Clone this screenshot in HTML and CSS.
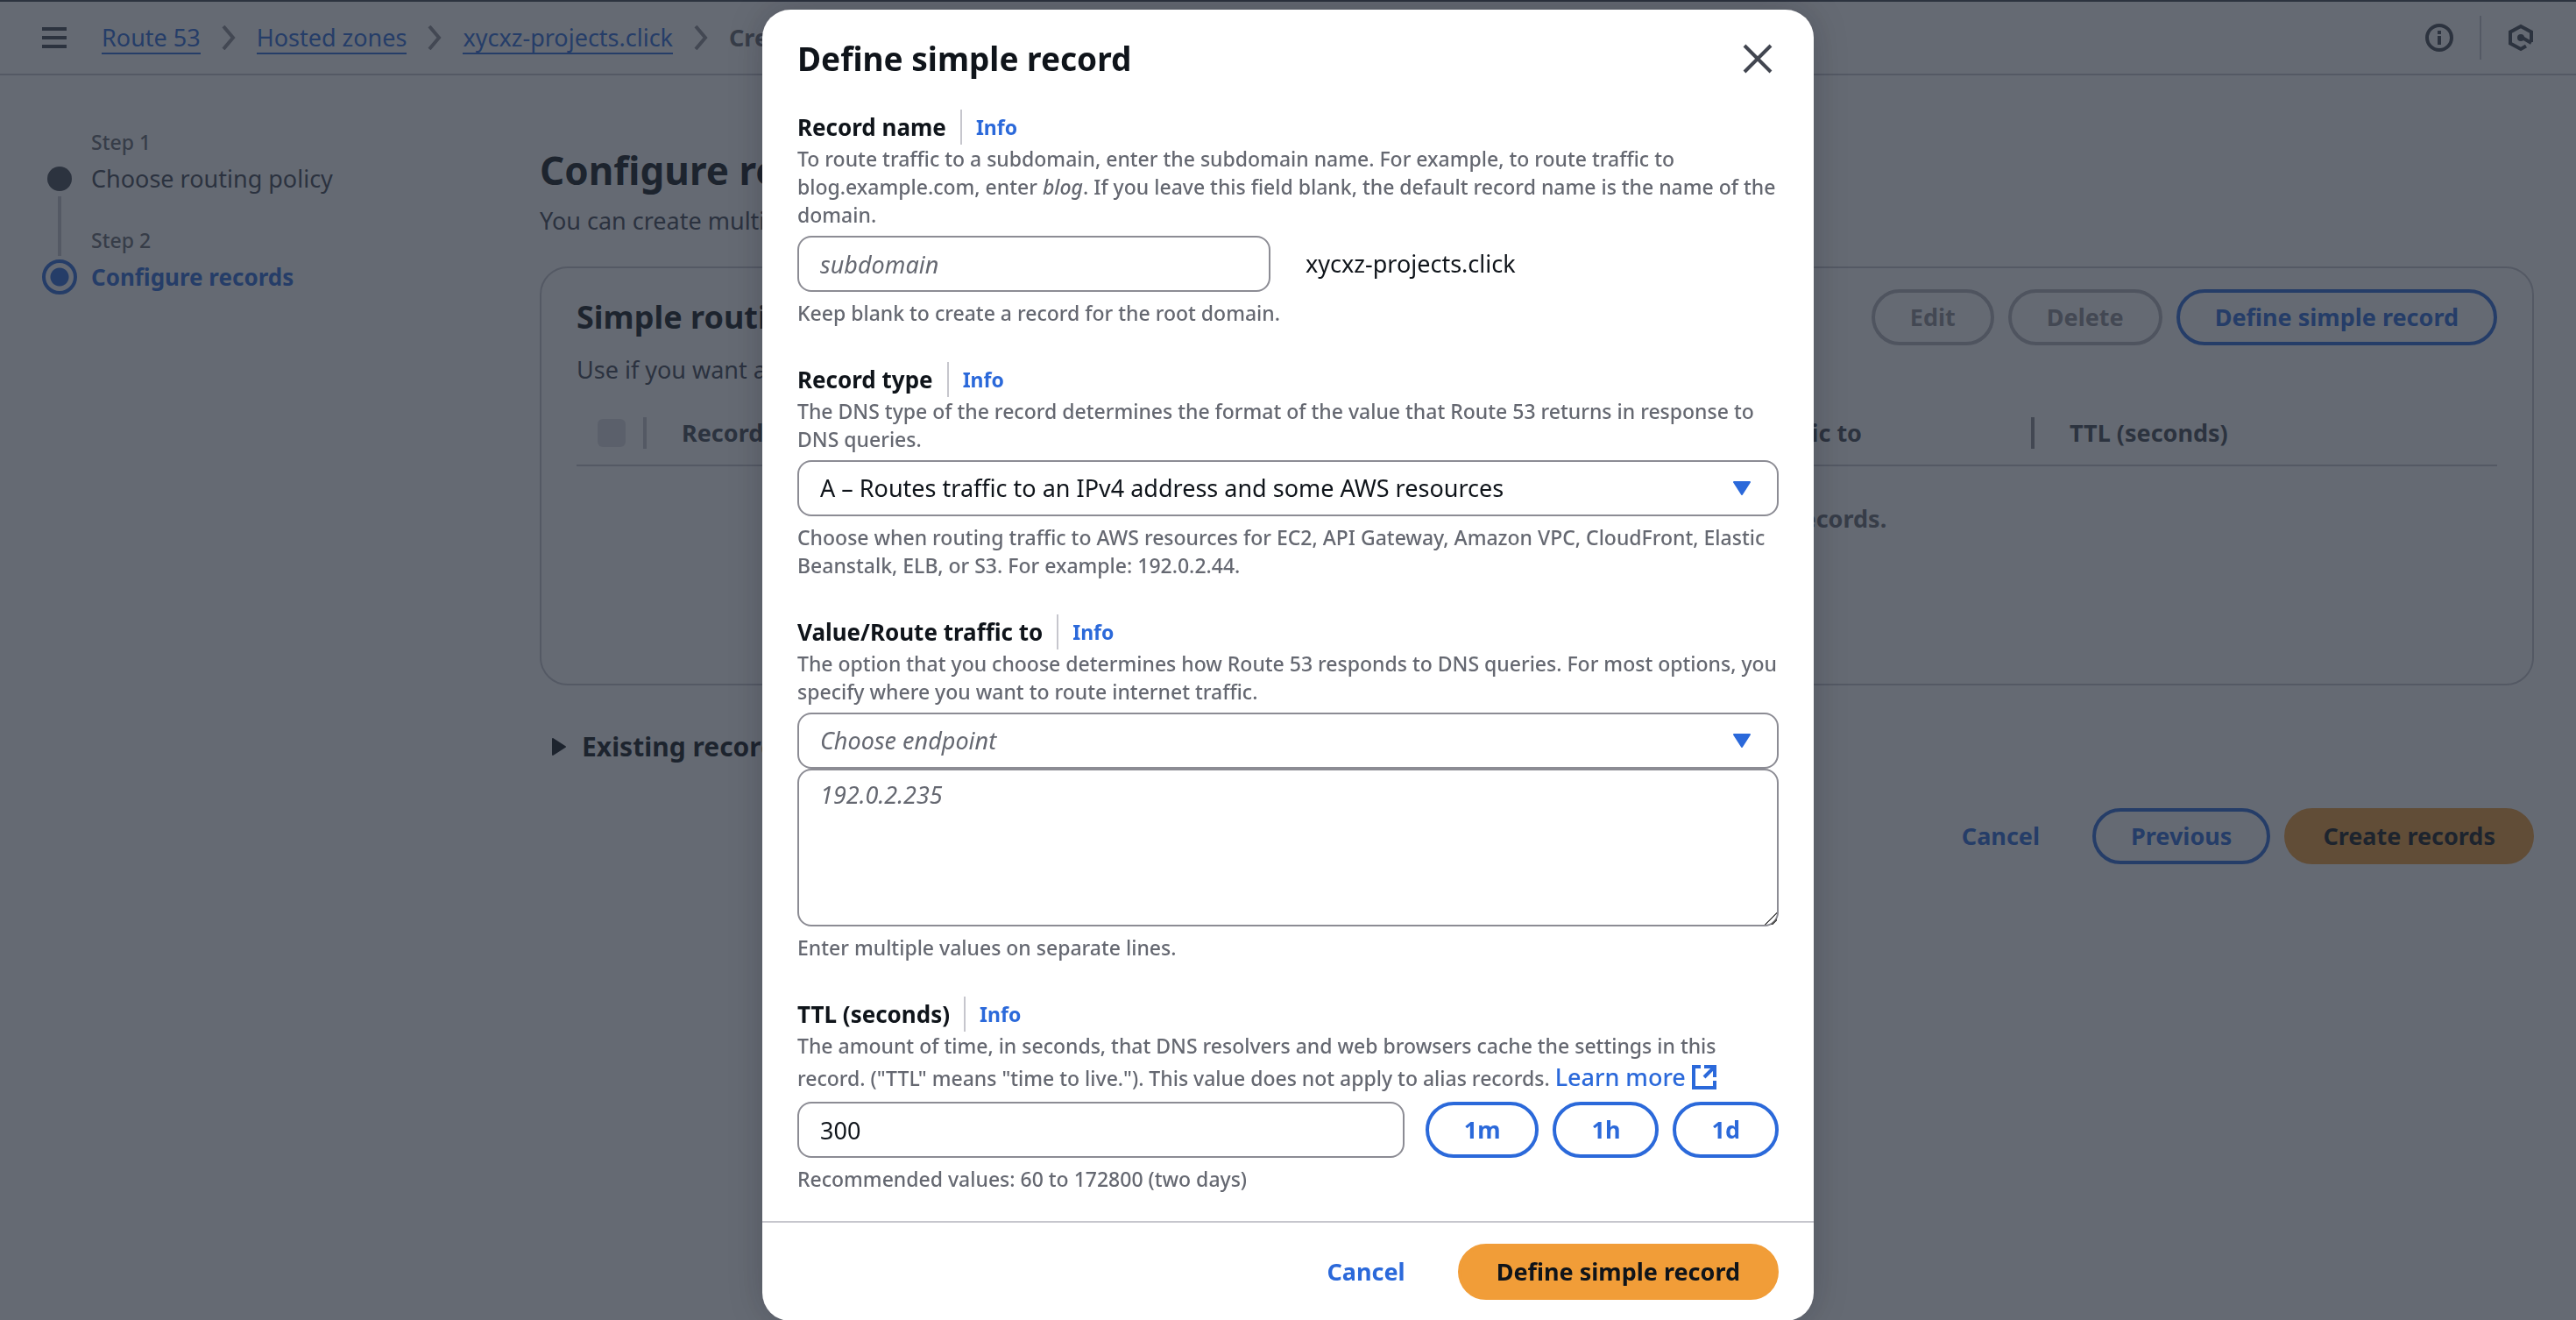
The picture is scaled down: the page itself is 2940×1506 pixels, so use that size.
FILE: index.html
```html
<!DOCTYPE html>
<html lang="en">
<head>
<meta charset="utf-8">
<meta name="viewport" content="width=device-width, initial-scale=1">
<title>Create record | Route 53</title>
<link rel="stylesheet" href="styles.css">
</head>
<body>
<div class="page">
  <header class="topbar">
    <button class="icon-button" type="button" aria-label="Open navigation">
      <svg width="28" height="24" viewBox="0 0 28 24"><path d="M0 2h28M0 12h28M0 22h28" stroke="currentColor" stroke-width="4"/></svg>
    </button>
    <nav class="breadcrumbs" aria-label="Breadcrumbs">
      <a href="#">Route 53</a>
      <svg class="chevron" viewBox="0 0 16 28"><path d="M2 1l11 13L2 27"/></svg>
      <a href="#">Hosted zones</a>
      <svg class="chevron" viewBox="0 0 16 28"><path d="M2 1l11 13L2 27"/></svg>
      <a href="#">xycxz-projects.click</a>
      <svg class="chevron" viewBox="0 0 16 28"><path d="M2 1l11 13L2 27"/></svg>
      <span class="current">Create record</span>
    </nav>
    <div class="tools">
      <button class="icon-button" type="button" aria-label="Info">
        <svg width="32" height="32" viewBox="0 0 32 32" fill="none" stroke="currentColor" stroke-width="4"><circle cx="16" cy="16" r="14"/><path d="M16 8v4M16 14v10"/></svg>
      </button>
      <span class="tools-divider"></span>
      <button class="icon-button" type="button" aria-label="Assistant">
        <svg width="30" height="32" viewBox="0 0 30 32" fill="none" stroke="currentColor" stroke-width="4"><path d="M21 25.500L15 29 3 22.500v-13L15 3l12 6.500V21"/><path d="M15 15l12 7"/><circle cx="15" cy="16" r="4" fill="currentColor" stroke="none"/></svg>
      </button>
    </div>
  </header>

  <div class="layout">
    <nav class="steps" aria-label="Steps">
      <ol>
        <li class="step">
          <span class="step-number">Step 1</span>
          <span class="marker done"></span>
          <span class="step-line"></span>
          <span class="step-title">Choose routing policy</span>
        </li>
        <li class="step">
          <span class="step-number">Step 2</span>
          <span class="marker active"></span>
          <span class="step-title current-step">Configure records</span>
        </li>
      </ol>
    </nav>

    <main class="main">
      <h1>Configure records</h1>
      <p class="subtitle">You can create multiple records at a time.</p>

      <section class="card">
        <div class="card-head">
          <div>
            <h2>Simple routing records to add</h2>
            <p>Use if you want all of your clients to receive the same response.</p>
          </div>
          <div class="actions">
            <button class="btn" type="button" disabled>Edit</button>
            <button class="btn" type="button" disabled>Delete</button>
            <button class="btn" type="button">Define simple record</button>
          </div>
        </div>
        <table class="records">
          <thead>
            <tr>
              <th class="select-col"><div class="cell"><input type="checkbox" aria-label="Select all" disabled></div></th>
              <th><div class="cell">Record name</div></th>
              <th><div class="cell">Type</div></th>
              <th><div class="cell">Value/Route traffic to</div></th>
              <th><div class="cell">TTL (seconds)</div></th>
            </tr>
          </thead>
          <tbody>
            <tr><td colspan="5">Choose Define simple record to create one or more records.</td></tr>
          </tbody>
        </table>
      </section>

      <button class="expander" type="button" aria-expanded="false">
        <svg width="16" height="20" viewBox="0 0 16 20"><path d="M1 1v18l14-9z" fill="currentColor" stroke="currentColor" stroke-width="2" stroke-linejoin="round"/></svg>
        Existing records
      </button>

      <div class="actions page-actions">
        <button class="btn link" type="button">Cancel</button>
        <button class="btn" type="button">Previous</button>
        <button class="btn primary" type="button">Create records</button>
      </div>
    </main>
  </div>
</div>

<div class="overlay">
  <form class="modal" role="dialog" aria-modal="true" aria-labelledby="dialog-title">
    <header class="modal-head">
      <h2 id="dialog-title">Define simple record</h2>
      <button class="icon-button close" type="button" aria-label="Close">
        <svg width="34" height="34" viewBox="0 0 34 34"><path d="M2 2l30 30M32 2L2 32" stroke="currentColor" stroke-width="4"/></svg>
      </button>
    </header>

    <div class="modal-body">
      <div class="field">
        <div class="label-row"><label for="name">Record name</label><a href="#">Info</a></div>
        <p class="hint">To route traffic to a subdomain, enter the subdomain name. For example, to route traffic to blog.example.com, enter <em>blog</em>. If you leave this field blank, the default record name is the name of the domain.</p>
        <div class="name-row">
          <input id="name" class="control" type="text" placeholder="subdomain">
          <span>xycxz-projects.click</span>
        </div>
        <p class="hint">Keep blank to create a record for the root domain.</p>
      </div>

      <div class="field">
        <div class="label-row"><label for="type">Record type</label><a href="#">Info</a></div>
        <p class="hint">The DNS type of the record determines the format of the value that Route 53 returns in response to DNS queries.</p>
        <div class="select">
          <select id="type" class="control"><option>A – Routes traffic to an IPv4 address and some AWS resources</option></select>
          <svg width="20" height="16" viewBox="0 0 20 16"><path d="M1 1h18l-9 14z"/></svg>
        </div>
        <p class="hint">Choose when routing traffic to AWS resources for EC2, API Gateway, Amazon VPC, CloudFront, Elastic Beanstalk, ELB, or S3. For example: 192.0.2.44.</p>
      </div>

      <div class="field">
        <div class="label-row"><label for="endpoint">Value/Route traffic to</label><a href="#">Info</a></div>
        <p class="hint">The option that you choose determines how Route 53 responds to DNS queries. For most options, you specify where you want to route internet traffic.</p>
        <div class="stack">
          <div class="select">
            <select id="endpoint" class="control empty"><option>Choose endpoint</option></select>
            <svg width="20" height="16" viewBox="0 0 20 16"><path d="M1 1h18l-9 14z"/></svg>
          </div>
          <textarea class="control" aria-label="Values" placeholder="192.0.2.235"></textarea>
        </div>
        <p class="hint">Enter multiple values on separate lines.</p>
      </div>

      <div class="field">
        <div class="label-row"><label for="ttl">TTL (seconds)</label><a href="#">Info</a></div>
        <p class="hint">The amount of time, in seconds, that DNS resolvers and web browsers cache the settings in this record. ("TTL" means "time to live."). This value does not apply to alias records. <a class="learn" href="#">Learn more <svg width="28" height="28" viewBox="0 0 28 28"><path d="M10 2H2v24h24v-8M14 2h12v12M26 2L14 14"/></svg></a></p>
        <div class="ttl-row">
          <input id="ttl" class="control" type="text" value="300">
          <div class="actions">
            <button class="btn" type="button">1m</button>
            <button class="btn" type="button">1h</button>
            <button class="btn" type="button">1d</button>
          </div>
        </div>
        <p class="hint">Recommended values: 60 to 172800 (two days)</p>
      </div>
    </div>

    <footer class="modal-foot actions">
      <button class="btn link" type="button">Cancel</button>
      <button class="btn primary" type="submit">Define simple record</button>
    </footer>
  </form>
</div>
</body>
</html>
```
FILE: styles.css
```css
:root {
  --text: #0f141a;
  --text-body: #3d4351;
  --text-muted: #656871;
  --blue: #2b69da;
  --orange: #f19d38;
  --line: #c6c6cd;
  --control-line: #8c8c94;
}

* {
  box-sizing: border-box;
}

body {
  margin: 0;
  overflow: hidden;
  background: #fff;
  color: var(--text);
  font: 27px/40px "Noto Sans", "Open Sans", sans-serif;
}

h1, h2, p, ol {
  margin: 0;
  padding: 0;
}

a {
  color: var(--blue);
}

button, input, select, textarea {
  font: inherit;
  color: inherit;
}

.icon-button {
  display: flex;
  padding: 0;
  border: 0;
  background: none;
  color: #424650;
}

/* Buttons */

.actions {
  display: flex;
  gap: 16px;
}

.btn {
  height: 64px;
  padding: 0 40px;
  border: 4px solid var(--blue);
  border-radius: 32px;
  background: none;
  color: var(--blue);
  font-weight: 700;
  line-height: 40px;
  white-space: nowrap;
}

.btn:disabled {
  border-color: #b4b4bb;
  color: #8c8c94;
}

.btn.link {
  border-color: transparent;
}

.btn.primary {
  border-color: var(--orange);
  background: var(--orange);
  color: var(--text);
}

/* Top bar */

.topbar {
  display: flex;
  align-items: center;
  height: 86px;
  padding: 0 48px;
  border-top: 2px solid #424650;
  border-bottom: 2px solid var(--line);
}

.breadcrumbs {
  display: flex;
  flex: 1;
  align-items: center;
  gap: 24px;
  margin-left: 40px;
}

.breadcrumbs a {
  height: 38px;
  border-bottom: 2px solid var(--blue);
  line-height: 38px;
  text-decoration: none;
}

.breadcrumbs .current {
  color: #656871;
  font-weight: 700;
}

.chevron {
  width: 16px;
  height: 28px;
  fill: none;
  stroke: var(--control-line);
  stroke-width: 4;
}

.tools {
  display: flex;
  align-items: center;
  gap: 30px;
}

.tools-divider {
  width: 2px;
  height: 50px;
  background: var(--line);
}

/* Page layout */

.layout {
  display: grid;
  grid-template-columns: 520px 1fr;
  gap: 48px;
  padding: 60px 48px;
}

.steps ol {
  list-style: none;
}

.step {
  display: grid;
  grid-template-columns: 40px 1fr;
  grid-template-rows: 38px 40px 34px;
  column-gap: 16px;
  align-items: center;
  justify-items: center;
}

.step-number {
  grid-column: 2;
  align-self: start;
  justify-self: start;
  color: var(--text-muted);
  font-size: 23px;
  font-weight: 500;
  line-height: 32px;
}

.step-title {
  grid-column: 2;
  grid-row: 2;
  justify-self: start;
  color: var(--text-body);
}

.current-step {
  color: var(--blue);
  font-size: 26px;
  font-weight: 700;
}

.marker {
  grid-column: 1;
  grid-row: 2;
  border-radius: 50%;
}

.marker.done {
  width: 28px;
  height: 28px;
  background: #424650;
}

.marker.active {
  width: 40px;
  height: 40px;
  border: 4px solid var(--blue);
  background: radial-gradient(circle, var(--blue) 10px, transparent 11px);
}

/* Joins this marker to the next one, across the next step's number row */
.step-line {
  grid-column: 1;
  grid-row: 3;
  align-self: start;
  width: 4px;
  height: 68px;
  background: var(--line);
}

.main h1 {
  padding: 18px 0 8px;
  font-size: 44px;
  line-height: 60px;
}

.subtitle {
  margin-bottom: 32px;
  color: var(--text-body);
}

.card {
  min-height: 478px;
  padding: 24px 40px;
  border: 2px solid var(--line);
  border-radius: 32px;
}

.card-head {
  display: flex;
  justify-content: space-between;
  align-items: flex-start;
}

.card-head h2 {
  padding: 8px 0;
  font-size: 36px;
  line-height: 48px;
}

.card-head p {
  padding: 8px 0 34px;
  color: var(--text-body);
}

.records {
  width: 100%;
  border-collapse: collapse;
  table-layout: fixed;
}

.records th {
  padding: 0 0 18px;
  border-bottom: 2px solid var(--line);
  color: #424650;
  text-align: left;
}

.records th, .records td {
  font-weight: 700;
}

.records .select-col {
  width: 80px;
}

.cell {
  display: flex;
  align-items: center;
  height: 36px;
  padding-left: 40px;
  border-right: 4px solid var(--control-line);
}

.select-col .cell {
  padding-left: 24px;
  border-color: var(--line);
}

.records th:last-child .cell {
  border: 0;
}

.records input {
  width: 32px;
  height: 32px;
  margin: 0;
  border-radius: 6px;
  background: #dedee3;
  appearance: none;
}

.records td {
  padding: 40px 0;
  color: var(--text-muted);
  text-align: center;
}

.expander {
  display: flex;
  align-items: center;
  gap: 18px;
  margin-top: 50px;
  padding: 0 14px;
  border: 0;
  background: none;
  color: var(--text);
  font-size: 30px;
  font-weight: 700;
  line-height: 40px;
}

.page-actions {
  justify-content: flex-end;
  margin-top: 50px;
}

/* Dialog */

.overlay {
  position: fixed;
  inset: 0;
  overflow: hidden;
  background: rgba(35, 43, 55, 0.7);
}

.modal {
  width: 1200px;
  max-width: 100%;
  margin: 11px auto;
  border-radius: 32px;
  background: #fff;
  box-shadow: 0 0 40px rgba(0, 7, 22, 0.2);
}

.modal-head {
  display: flex;
  justify-content: space-between;
  align-items: center;
  padding: 32px 47px 34px 40px;
}

.modal-head h2 {
  font-size: 37px;
  line-height: 48px;
}

.modal-body {
  display: flex;
  flex-direction: column;
  gap: 40px;
  padding: 0 40px 32px;
}

.field {
  display: flex;
  flex-direction: column;
  gap: 8px;
}

.label-row {
  display: flex;
  margin-bottom: -8px;
  font-weight: 700;
}

.label-row label {
  margin-right: 16px;
  font-size: 26px;
}

.label-row a {
  padding-left: 16px;
  border-left: 2px solid var(--line);
  font-size: 23px;
  text-decoration: none;
}

.hint {
  color: var(--text-muted);
  font-size: 23px;
  font-weight: 500;
  line-height: 32px;
}

.learn {
  font-size: 27px;
  line-height: 40px;
  text-decoration: none;
}

.learn svg {
  vertical-align: -4px;
  fill: none;
  stroke: currentColor;
  stroke-width: 4;
}

.control {
  width: 100%;
  height: 64px;
  padding: 0 24px;
  border: 2px solid var(--control-line);
  border-radius: 16px;
  background: #fff;
  appearance: none;
}

.control::placeholder, .control.empty {
  color: var(--text-muted);
  font-style: italic;
  opacity: 1;
}

textarea.control {
  display: block;
  height: 180px;
  padding: 8px 24px;
  resize: vertical;
}

textarea::-webkit-resizer {
  background: linear-gradient(135deg, transparent 50%, #555 50% 58%, transparent 58% 76%, #555 76% 84%, transparent 84%);
}

.name-row {
  display: grid;
  grid-template-columns: 540px 1fr;
  gap: 40px;
  align-items: center;
}

.select {
  display: grid;
  align-items: center;
}

.select > * {
  grid-area: 1 / 1;
}

.select svg {
  justify-self: end;
  margin-right: 32px;
  fill: var(--blue);
  stroke: var(--blue);
  stroke-width: 2;
  stroke-linejoin: round;
  pointer-events: none;
}

.ttl-row {
  display: flex;
  gap: 24px;
}

.modal-foot {
  justify-content: flex-end;
  padding: 24px 40px;
  border-top: 2px solid var(--line);
}
```
